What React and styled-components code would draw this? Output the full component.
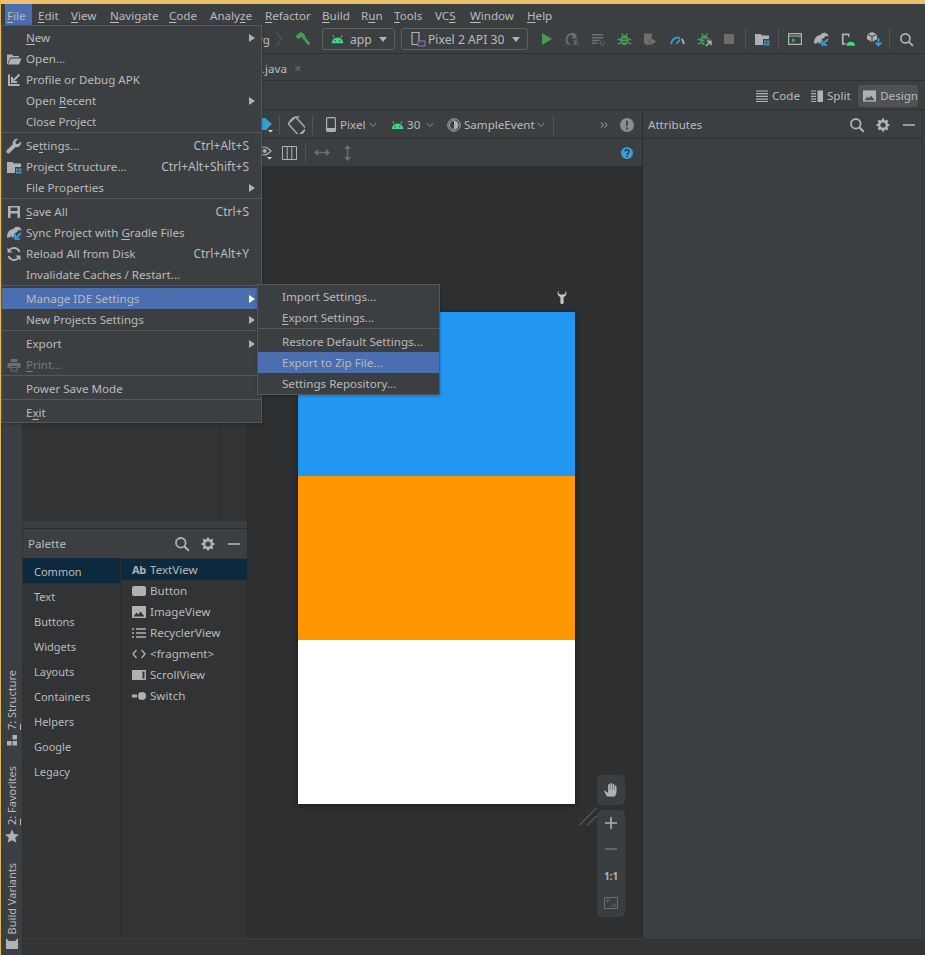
import React from "react";
import styled, { createGlobalStyle } from "styled-components";

const Global = createGlobalStyle`
  html, body { margin: 0; padding: 0; background: #3c3f41; }
  body { font-family: "Noto Sans", "Open Sans", sans-serif; font-size: 11.6px; color: #bbbbbb; }
  * { box-sizing: border-box; }
`;

const Win = styled.div`position: relative; width: 925px; height: 955px; overflow: hidden; display: flex; flex-direction: column; background: #3c3f41; border-left: 1px solid #e2b55c;`;
const TitleStripe = styled.div`flex: none; height: 4px; margin-left: -1px; background: #ecc06e;`;
const MenuBar = styled.div`flex: none; height: 21px; display: flex; padding-left: 4px;`;
const MenuTitle = styled.div`flex: none; width: ${p => p.$w}px; margin-right: ${p => p.$mr || 0}px; padding: 1px 0 0 2px; display: flex; align-items: center; background: ${p => (p.$on ? "#4b6eaf" : "transparent")}; white-space: nowrap;`;
const U = styled.span`text-decoration: underline; text-underline-offset: 2px; text-decoration-thickness: 1px;`;

const Bar = styled.div`flex: none; height: ${p => p.$h}px; display: flex; align-items: center; padding: ${p => p.$pt || 0}px ${p => p.$pr || 0}px 0 ${p => p.$pl || 0}px; justify-content: ${p => (p.$end ? "flex-end" : "flex-start")}; border-bottom: 1px solid ${p => p.$line || "#2f3133"}; overflow: hidden;`;
const Tool = styled.span`flex: none; display: flex; align-items: center; margin-left: ${p => p.$ml || 0}px; width: ${p => (p.$w ? p.$w + "px" : "auto")}; white-space: nowrap; color: ${p => p.$c || "inherit"};`;
const PushRight = styled(Tool)`margin-left: auto;`;
const Sep = styled.span`flex: none; width: 1px; height: 20px; margin-left: ${p => p.$ml || 0}px; background: #515355;`;
const Combo = styled.div`flex: none; display: flex; align-items: center; height: 22px; width: ${p => p.$w}px; margin-left: ${p => p.$ml}px; padding-left: 8px; border: 1px solid #5e6060; border-radius: 3px; gap: ${p => p.$g}px; font-size: 12.2px; white-space: nowrap;`;
const ComboCaret = styled.span`margin-left: auto; margin-right: 7px; width: 0; height: 0; border-left: 4px solid transparent; border-right: 4px solid transparent; border-top: 5px solid #afb1b3;`;
const WhiteTip = styled.span`flex: none; width: 3px; height: 14px; margin-left: 11px; background: #d4d4d4;`;
const TabClose = styled.span`flex: none; margin-left: 7px; font-size: 13px; color: #6e7072; line-height: 1;`;

const ModeGroup = styled.div`flex: none; display: flex; align-items: center; height: 22px; gap: 4px; width: ${p => p.$w}px; padding-left: ${p => p.$pl || 0}px; margin-left: ${p => p.$ml || 0}px; border-radius: 3px; background: ${p => (p.$on ? "#4e5254" : "transparent")};`;

const Work = styled.div`flex: 1; min-height: 0; display: flex;`;
const SideStripe = styled.div`flex: none; width: 22px; display: flex; flex-direction: column; justify-content: flex-end; align-items: center; padding-bottom: 6px; border-right: 1px solid #2f3133; background: #3c3f41;`;
const SideTab = styled.div`display: flex; flex-direction: column; align-items: center; gap: 4px; margin-top: ${p => p.$mt || 0}px;`;
const SideLabel = styled.span`writing-mode: vertical-rl; transform: rotate(180deg); font-size: 11px; white-space: nowrap; line-height: 14px;`;
const Main = styled.div`flex: 1; min-width: 0; display: flex; flex-direction: column;`;
const Panels = styled.div`flex: 1; min-height: 0; display: flex;`;
const StatusBar = styled.div`flex: none; height: 17px; background: #323436; border-top: 1px solid #3a3c3e;`;

const LeftCol = styled.div`flex: none; width: 225px; display: flex; flex-direction: column; background: #313335; border-right: 1px solid #2b2c2e;`;
const UpperLeft = styled.div`flex: 1; display: flex; justify-content: flex-end;`;
const Pane2 = styled.div`width: 27px; border-left: 1px solid #2b2c2e;`;
const GrabBar = styled.div`flex: none; height: 8px; background: #3c3f41; border-bottom: 1px solid #2b2c2e;`;
const PanelHead = styled.div`flex: none; height: 29px; display: flex; align-items: center; padding: 0 5px; background: #3c3f41;`;
const PanelBodyHead = styled(PanelHead)`padding-top: 1px; border-bottom: 1px solid #2f3133;`;
const PanelTitle = styled.span`flex: 1;`;
const HeadIcons = styled.div`display: flex; gap: 10px;`;
const PaletteBody = styled.div`flex: none; height: 380px; display: flex; background: #313335;`;
const CatList = styled.div`flex: none; width: 98px; border-right: 1px solid #2b2c2e;`;
const Cat = styled.div`height: 25px; display: flex; align-items: center; padding: 2px 0 0 11px; background: ${p => (p.$on ? "#0d293e" : "transparent")}; font-size: 11px;`;
const ItemList = styled.div`flex: 1; padding-top: 1px;`;
const Item = styled.div`height: 21px; display: flex; align-items: center; gap: 4px; padding-left: 11px; background: ${p => (p.$on ? "#0d293e" : "transparent")};`;
const AbIcon = styled.span`flex: none; width: 14px; font-weight: 700; font-size: 11px; color: #afb1b3; letter-spacing: -.4px;`;

const Editor = styled.div`flex: none; width: 395px; display: flex; flex-direction: column; border-right: 1px solid #2b2c2e;`;
const Canvas = styled.div`position: relative; flex: 1; background: #2e2f31; padding: 145px 0 0 50px;`;
const Device = styled.div`position: relative; width: 277px; height: 492px; display: flex; flex-direction: column; box-shadow: 0 1px 6px rgba(0,0,0,.45);`;
const Block = styled.div`flex: 1; background: ${p => p.$c};`;
const WrenchMark = styled.span`position: absolute; top: -22px; right: 8px; display: flex;`;
const ZoomDock = styled.div`position: absolute; left: 349px; top: 608px; display: flex; flex-direction: column; gap: 5px;`;
const ZoomBox = styled.div`width: 28px; display: flex; flex-direction: column; align-items: center; background: #3b3e40; border-radius: 5px; padding: ${p => p.$p || "0"}; gap: ${p => p.$g || 0}px;`;
const OneToOne = styled.span`font-size: 10px; font-weight: 700; color: #afb1b3; line-height: 14px;`;
const Resizer = styled.svg`position: absolute; left: 331px; top: 641px;`;

const Attrs = styled.div`flex: 1; min-width: 0; display: flex;`;
const AttrsMain = styled.div`flex: 1; min-width: 0; display: flex; flex-direction: column; border-right: 1px solid #2f3133;`;
const AttrsFill = styled.div`flex: 1; background: #3c3f41;`;
const RightEdge = styled.div`flex: none; width: 2px;`;

const Menu = styled.div`position: absolute; left: ${p => p.$x}px; top: ${p => p.$y}px; width: ${p => p.$w}px; height: ${p => p.$h}px; background: #3c3f41; border: 1px solid #555759; padding-top: 1px; overflow: hidden; box-shadow: 0 1px 3px rgba(0,0,0,.25);`;
const Row = styled.div`height: 21px; display: flex; align-items: center; padding-left: ${p => p.$pl || 4}px; padding-right: 11px; background: ${p => (p.$on ? "#4b6eaf" : "transparent")}; color: ${p => (p.$off ? "#777a7c" : "#bbbbbb")}; white-space: nowrap;`;
const RowIcon = styled.span`flex: none; width: 16px; height: 16px; margin-right: 4px; display: flex;`;
const Keys = styled.span`margin-left: auto; font-size: 12px; margin-right: 1px;`;
const Arrow = styled.span`margin-left: auto; margin-right: -5px; width: 0; height: 0; border-top: 4px solid transparent; border-bottom: 4px solid transparent; border-left: 6px solid ${p => (p.$w ? "#ffffff" : "#afb1b3")};`;
const MenuSep = styled.div`height: 3px; border-top: 1px solid #555759;`;

const G = "#afb1b3", GR = "#3ddc84", GN = "#499c54", BL = "#389fd6", DK = "#6e6e6e";
const Sv = ({ w = 16, h = 16, vb = "0 0 16 16", children }) => <svg width={w} height={h} viewBox={vb} fill="none">{children}</svg>;

const Android = ({ w = 13 }) => <Sv w={w} h={w * 0.72} vb="0 0 18 13"><path d="M1 13a8 8 0 0 1 16 0z" fill={GR} /><path d="M4.5 5.5 2.500 1.500M13.500 5.500l2-4" stroke={GR} strokeWidth="1.3" /><circle cx="5.800" cy="9.500" r="1" fill="#3c3f41" /><circle cx="12.200" cy="9.500" r="1" fill="#3c3f41" /></Sv>;
const Search = ({ s = 16 }) => <Sv w={s} h={s}><circle cx="6.800" cy="6.800" r="4.800" stroke={G} strokeWidth="1.8" /><path d="m10.500 10.500 4.300 4.300" stroke={G} strokeWidth="2.1" /></Sv>;
const Gear = () => <Sv><circle cx="8" cy="8" r="3.900" stroke={G} strokeWidth="2.6" /><path d="M8 1.500v3M8 11.500v3M1.500 8h3M11.500 8h3M3.400 3.400l2.100 2.100M10.500 10.500l2.100 2.100M12.600 3.400l-2.100 2.100M5.500 10.500l-2.100 2.100" stroke={G} strokeWidth="2.2" /></Sv>;
const Minus = () => <Sv><path d="M2 8h12" stroke={G} strokeWidth="1.6" /></Sv>;
const Wrench = () => <Sv><path d="M15 3.500 12 6.300 9.800 5.800 9.400 3.600 12.200.9A4.500 4.500 0 0 0 6.800 6.300L1 12a1.900 1.900 0 0 0 2.800 2.800l5.900-5.700A4.500 4.500 0 0 0 15 3.500z" fill={G} /></Sv>;
const UprightWrench = () => <Sv w={10} h={14} vb="0 0 10 14"><path d="M1.500.5A4 4 0 0 0 3.400 7v6a1.600 1 0 0 0 3.200 0V7A4 4 0 0 0 8.500.5V3.500L6.500 4.500h-3L1.500 3.500z" fill="#c4c6c8" /></Sv>;
const FolderOpen = () => <Sv><path d="M1 13V3.500h5l1.500 1.500H13v1.500H4L1.600 13z" fill={G} /><path d="M4.600 7.500H15.500L13 13.500H2z" fill={G} /></Sv>;
const ProfileApk = () => <Sv><path d="M2 2.500h2v9.500h9.500V14H2z" fill={G} /><path d="m13.500 2.500-6 6M6 5v5h5" stroke={G} strokeWidth="2" /></Sv>;
const ProjectStruct = ({ s = 16 }) => <Sv w={s} h={s}><path d="M1 3h5.500L8 4.500h7V8H9v6H1z" fill={G} /><path d="M10 9.500h2.400v2H10zM13 9.500h2.400v2H13zM13 12.300h2.400v2.200H13zM10 12.300h2.400v2.200H10z" fill={BL} /></Sv>;
const Save = () => <Sv><path d="M2 2h12v12H2z" fill={G} /><path d="M4.500 3.500h7v3.500h-7zM4.500 9.500h7v4.500h-7z" fill="#3c3f41" /></Sv>;
const Elephant = ({ s = 16 }) => <Sv w={s} h={s}><path d="M1 12.500C1 7.500 3.500 4 7.500 4c1-2 3.500-2.600 5.500-1.800 1.700.6 2.600 2 2.500 3.600l-2-.8c-.8 0-1.500.6-2 1.400-1.200 1.600-2.500 1-3.300 2.600L7.500 12.500H5.500V10.300L3.600 12.500z" fill={G} /><path d="m15 8-4.500 4.500M9.200 9v4.800H14" stroke={BL} strokeWidth="1.8" /></Sv>;
const Reload = () => <Sv><path d="M13.500 6A6 6 0 0 0 3 4.500M2.500 10A6 6 0 0 0 13 11.500" stroke={G} strokeWidth="2" /><path d="M1.500 1.500v5h5zM14.500 14.500v-5h-5z" fill={G} /></Sv>;
const Printer = () => <Sv><path d="M4.500 2h7v3h-7z" fill={DK} /><path d="M1.500 6h13v5h-3V9h-7v2h-3z" fill={DK} /><path d="M5 10.500h6V14H5z" stroke={DK} /></Sv>;
const Hammer = () => <Sv><path d="M.5 5.200 5.500 1l3 1.500 2 3-2 2-2-1.500-3.500 2z" fill={GN} /><path d="m7 6.500 1.700-1.700 6.600 7.500-2 2z" fill={GN} /></Sv>;
const DevicePick = () => <Sv w={16} h={16}><path d="M2 1.500h7v12H2z" stroke={G} strokeWidth="1.2" /><path d="M8 10h7v5H8z" fill="#3c3f41" stroke="#9876c4" /></Sv>;
const Play = () => <Sv w={12} h={14} vb="0 0 12 14"><path d="M1 1v12l10-6z" fill={GN} /></Sv>;
const Rerun = () => <Sv w={15} h={15}><path d="M13 4A6 6 0 1 0 6 13.500" stroke={DK} strokeWidth="2" /><path d="M9 1v6h6z" fill={DK} /><path d="M10.500 8.500 13 14M10.500 14l2.500-5.500 2 5.500" stroke={DK} /></Sv>;
const Apply = () => <Sv w={15} h={15}><path d="M1 3h12M1 6h12M1 9h8M1 12h6" stroke={DK} strokeWidth="1.6" /><path d="M14 10.500a2.300 2.300 0 1 1-2.500-1" stroke={DK} /></Sv>;
const Bug = ({ arrow }) => <Sv w={15} h={15}><path d="M8 3.500a4.400 5 0 0 0-4.400 5.500A4.400 5 0 0 0 8 14a4.400 5 0 0 0 4.400-5A4.400 5 0 0 0 8 3.500z" fill={GN} /><path d="M5 1.500 6.500 4M11 1.500 9.500 4M.8 8h3M12.200 8h3M1 13l3-1.500M15 13l-3-1.500" stroke={GN} strokeWidth="1.5" /><path d="M5.500 7.500h5M5.500 10.500h5" stroke="#3c3f41" strokeWidth="1.2" />{arrow && <path d="M8 8h8v8H8z" fill="#3c3f41" />}{arrow && <path d="m9.500 15 5-5M10.500 9.800h4.300v4.300" stroke={G} strokeWidth="1.6" />}</Sv>;
const ProfileRun = () => <Sv w={15} h={15}><path d="M1 1.500h8.500v4L7 8v5l-2 1.500L1 12z" fill={DK} /><path d="M7.500 6v8.500L14.500 10z" fill={DK} /></Sv>;
const Gauge = () => <Sv w={15} h={15}><path d="M1.500 13A6.600 6.600 0 0 1 11 6.700" stroke={BL} strokeWidth="2" /><path d="M7 12.500 10.700 8" stroke={BL} strokeWidth="1.8" /><path d="M12.500 7.500a6.600 6.600 0 0 1 2 5.500" stroke={G} strokeWidth="2" /></Sv>;
const Stop = () => <Sv w={10} h={10} vb="0 0 10 10"><path d="M0 0h10v10H0z" fill={DK} /></Sv>;
const Terminal = () => <Sv w={14} h={12} vb="0 0 14 12"><path d="M.6.6h12.800v10.800H.6z" stroke={G} strokeWidth="1.2" /><path d="M.6 3h12.800" stroke={G} /><path d="M4 5v4.500L8 7.200z" fill={GN} /></Sv>;
const PhoneAndroid = () => <Sv w={14} h={15}><path d="M1 1h8.500v4H8V3H3v9h2v2H1z" fill={G} /><path d="M6 15a5 4.500 0 0 1 10 0z" fill={GR} /></Sv>;
const Sdk = () => <Sv><path d="M6 1l5 2.300v5L6 11 1 8.300v-5z" fill={G} /><path d="M6 5.500V11M1 3.300l5 2.200 5-2.200" stroke="#3c3f41" /><path d="M12.500 7v7M9.500 11.500l3 3 3-3" stroke={BL} strokeWidth="1.7" /></Sv>;
const LinesIcon = () => <Sv w={12} h={12} vb="0 0 12 12"><path d="M0 1h12M0 3.700h12M0 6.400h12M0 9.100h12M0 11.500h12" stroke={G} strokeWidth="1.2" /></Sv>;
const SplitIcon = () => <Sv w={12} h={12} vb="0 0 12 12"><path d="M0 1h5M0 3.700h5M0 6.400h5M0 9.100h5M0 11.500h5" stroke={G} strokeWidth="1.2" /><path d="M6.500.5H12v11.500H6.500z" fill={G} /></Sv>;
const ImageIcon = ({ bg = "#4e5254", c = G }) => <Sv w={14} h={12} vb="0 0 14 12"><path d="M0 0h14v12H0z" fill={c} /><path d="m1.500 10.500 3-4 2 2 2-3 4 5z" fill={bg} /></Sv>;
const LayersBlue = () => <Sv><path d="M2 1h5l7 6-6 6H2z" fill={BL} /><path d="M10 13h5l-2.500 2.500z" fill="#d8d8d8" /></Sv>;
const Rotate = () => <Sv w={18} h={18}><rect x="4.500" y="2" width="9" height="14" rx="1" transform="rotate(-42 9 9)" stroke={G} strokeWidth="1.2" /><path d="M2 5.500A8 8 0 0 1 11 1M16 12a8 8 0 0 1-8 5" stroke={G} /></Sv>;
const Phone = () => <Sv w={10} h={15} vb="0 0 10 15"><rect x=".6" y=".6" width="8.800" height="13.800" rx="1" stroke={G} strokeWidth="1.2" /><path d="M1 11h8v3.500H1z" fill={G} /></Sv>;
const Chev = () => <Sv w={8} h={6} vb="0 0 8 6"><path d="m.8 1 3.200 3.400L7.200 1" stroke={DK} strokeWidth="1.2" /></Sv>;
const ThemeIcon = () => <Sv w={14} h={14} vb="0 0 14 14"><circle cx="7" cy="7" r="6.200" stroke={G} /><path d="M7 2.500a4.500 4.500 0 0 1 0 9z" fill={G} /><path d="M7 2.500a4.500 4.500 0 0 0 0 9" stroke={G} /></Sv>;
const DoubleChev = () => <Sv w={8} h={8} vb="0 0 8 8"><path d="m.8 1.500 2.700 2.500L.8 6.500M4.500 1.500 7.200 4 4.500 6.500" stroke={G} strokeWidth=".9" /></Sv>;
const Warn = () => <Sv w={14} h={14} vb="0 0 14 14"><circle cx="7" cy="7" r="7" fill="#8a8c8e" /><path d="M6 2.800h2l-.3 5.400H6.300zM6 9.500h2v2H6z" fill="#3c3f41" /></Sv>;
const Eye = () => <Sv w={14} h={15} vb="0 0 14 15"><path d="M0 6c2-3 4-4 6-4s4 1 7 4c-3 3-5 4-7 4S2 9 0 6z" stroke={G} strokeWidth="1.2" /><circle cx="6.500" cy="6" r="2" fill={G} /><path d="M9 12h5l-2.500 2.500z" fill="#d8d8d8" /></Sv>;
const Columns = () => <Sv w={15} h={14} vb="0 0 15 14"><path d="M.5.5h14v13H.5zM5.200.5v13M9.800.5v13" stroke={G} /></Sv>;
const HArrow = () => <Sv w={16} h={9} vb="0 0 16 9"><path d="M2 4.500h12" stroke={DK} strokeWidth="1.4" /><path d="M0 4.500 4 1v7zM16 4.500 12 1v7z" fill={DK} /></Sv>;
const VArrow = () => <Sv w={9} h={16} vb="0 0 9 16"><path d="M4.500 2v12" stroke={DK} strokeWidth="1.4" /><path d="M4.500 0 8 4H1zM4.500 16 8 12H1z" fill={DK} /></Sv>;
const Help = () => <Sv w={12} h={12} vb="0 0 12 12"><circle cx="6" cy="6" r="6" fill={BL} /><path d="M4 4.600a2 2 0 1 1 3.200 1.600c-.7.5-1.200.8-1.200 1.600" stroke="#2e2f31" strokeWidth="1.3" /><path d="M5.300 8.700h1.400v1.400H5.300z" fill="#2e2f31" /></Sv>;
const ButtonIcon = () => <Sv w={14} h={10} vb="0 0 14 10"><rect width="14" height="10" rx="2" fill={G} /></Sv>;
const ListIcon = () => <Sv w={14} h={10} vb="0 0 14 10"><path d="M0 1h2M4 1h10M0 5h2M4 5h10M0 9h2M4 9h10" stroke={G} strokeWidth="1.5" /></Sv>;
const CodeIcon = () => <Sv w={14} h={10} vb="0 0 14 10"><path d="M4.500 1 1 5l3.500 4M9.500 1 13 5l-3.500 4" stroke={G} strokeWidth="1.3" /></Sv>;
const ScrollIcon = () => <Sv w={14} h={10} vb="0 0 14 10"><path d="M0 0h14v10H0z" fill={G} /><path d="M10.500 1.500h2v7h-2z" fill="#313335" /></Sv>;
const SwitchIcon = () => <Sv w={14} h={8} vb="0 0 14 8"><path d="M0 2.500h5v3H0z" fill={G} /><circle cx="10" cy="4" r="4" fill={G} /></Sv>;
const Structure = () => <Sv w={12} h={12} vb="0 0 12 12"><path d="M6.500 1H11v4.500H6.500zM1 7h4.500v4.500H1zM6.500 7H11v4.500H6.500z" fill={G} /></Sv>;
const Star = () => <Sv w={14} h={14} vb="0 0 14 14"><path d="m7 .5 2 4.500 5 .5-3.800 3.300 1.200 5L7 11.200 2.600 13.800l1.200-5L0 5.500 5 5z" fill={G} /></Sv>;
const BuildVariant = () => <Sv w={12} h={11} vb="0 0 12 11"><path d="M0 0l3 3h6l3-3v11H0z" fill={G} /></Sv>;
const Hand = () => <Sv><path d="M3 9.500c-1-1.500-2.200-1-1.800 0L4 14.500h8l1.500-4V4.500a.9.9 0 0 0-1.800 0V8h-.4V2.800a.9.9 0 0 0-1.800 0V8h-.4V2a.9.9 0 0 0-1.800 0v6H6.900V3a.9.9 0 0 0-1.800 0v8z" fill={G} /></Sv>;
const Plus = () => <Sv w={12} h={12} vb="0 0 12 12"><path d="M6 0v12M0 6h12" stroke={G} strokeWidth="1.6" /></Sv>;
const ZoomOut = () => <Sv w={12} h={12} vb="0 0 12 12"><path d="M0 6h12" stroke={DK} strokeWidth="1.6" /></Sv>;
const Fit = () => <Sv w={14} h={12} vb="0 0 14 12"><path d="M.5.5h13v11H.5z" stroke={DK} /><path d="M3 5.500V3h3M11 6.500V9H8" stroke={DK} /></Sv>;

const Palette = [["Button", <ButtonIcon />], ["ImageView", <ImageIcon bg="#313335" />], ["RecyclerView", <ListIcon />], ["<fragment>", <CodeIcon />], ["ScrollView", <ScrollIcon />], ["Switch", <SwitchIcon />]];
const Cats = ["Text", "Buttons", "Widgets", "Layouts", "Containers", "Helpers", "Google", "Legacy"];

export default function App() {
  return (
    <Win>
      <Global />
      <TitleStripe />
      <MenuBar>
        <MenuTitle $w={27} $mr={4} $on><span><U>F</U>ile</span></MenuTitle>
        <MenuTitle $w={33}><span><U>E</U>dit</span></MenuTitle>
        <MenuTitle $w={39}><span><U>V</U>iew</span></MenuTitle>
        <MenuTitle $w={59}><span><U>N</U>avigate</span></MenuTitle>
        <MenuTitle $w={41}><span><U>C</U>ode</span></MenuTitle>
        <MenuTitle $w={55}><span>Analy<U>z</U>e</span></MenuTitle>
        <MenuTitle $w={57}><span><U>R</U>efactor</span></MenuTitle>
        <MenuTitle $w={39}><span><U>B</U>uild</span></MenuTitle>
        <MenuTitle $w={33}><span>R<U>u</U>n</span></MenuTitle>
        <MenuTitle $w={41}><span><U>T</U>ools</span></MenuTitle>
        <MenuTitle $w={35}><span>VC<U>S</U></span></MenuTitle>
        <MenuTitle $w={57}><span><U>W</U>indow</span></MenuTitle>
        <MenuTitle $w={38}><span><U>H</U>elp</span></MenuTitle>
      </MenuBar>

      <Bar $h={29} $pl={257} $line="#2f3133">
        <Tool $w={13}>rg</Tool>
        <Tool $ml={5}><Sv w={6} h={14} vb="0 0 6 14"><path d="m.5.5 5 6.500-5 6.500" stroke="#5e6060" /></Sv></Tool>
        <Tool $ml={13}><Hammer /></Tool>
        <Combo $w={73} $ml={11} $g={6}><Android /><span>app</span><ComboCaret /></Combo>
        <Combo $w={127} $ml={6} $g={2}><DevicePick /><span>Pixel 2 API 30</span><ComboCaret /></Combo>
        <Tool $ml={13}><Play /></Tool>
        <Tool $ml={11}><Rerun /></Tool>
        <Tool $ml={12}><Apply /></Tool>
        <Tool $ml={11}><Bug /></Tool>
        <Tool $ml={11}><ProfileRun /></Tool>
        <Tool $ml={12}><Gauge /></Tool>
        <Tool $ml={12}><Bug arrow /></Tool>
        <Tool $ml={12}><Stop /></Tool>
        <Sep $ml={11} />
        <Tool $ml={8}><ProjectStruct /></Tool>
        <Sep $ml={8} />
        <Tool $ml={9}><Terminal /></Tool>
        <Tool $ml={11}><Elephant /></Tool>
        <Tool $ml={12}><PhoneAndroid /></Tool>
        <Tool $ml={11}><Sdk /></Tool>
        <Sep $ml={7} />
        <Tool $ml={9}><Search s={15} /></Tool>
        <WhiteTip />
      </Bar>

      <Bar $h={27} $pl={261} $pt={2} $line="#2f3133">
        <span>.java</span>
        <TabClose>×</TabClose>
      </Bar>

      <Bar $h={29} $pt={1} $line="#2f3133" $end $pr={7}>
        <ModeGroup $w={50}><LinesIcon /><span>Code</span></ModeGroup>
        <ModeGroup $w={46} $ml={5}><SplitIcon /><span>Split</span></ModeGroup>
        <ModeGroup $w={60} $pl={5} $on $ml={1}><ImageIcon /><span>Design</span></ModeGroup>
      </Bar>

      <Work>
        <SideStripe>
          <SideTab>
            <SideLabel><U>7</U>: Structure</SideLabel>
            <Structure />
          </SideTab>
          <SideTab $mt={20}>
            <SideLabel><U>2</U>: Favorites</SideLabel>
            <Star />
          </SideTab>
          <SideTab $mt={20}>
            <SideLabel>Build Variants</SideLabel>
            <BuildVariant />
          </SideTab>
        </SideStripe>

        <Main>
          <Panels>
            <LeftCol>
              <UpperLeft><Pane2 /></UpperLeft>
              <GrabBar />
              <PanelHead>
                <PanelTitle>Palette</PanelTitle>
                <HeadIcons><Search /><Gear /><Minus /></HeadIcons>
              </PanelHead>
              <PaletteBody>
                <CatList>
                  <Cat $on>Common</Cat>
                  {Cats.map(c => <Cat key={c}>{c}</Cat>)}
                </CatList>
                <ItemList>
                  <Item $on><AbIcon>Ab</AbIcon><span>TextView</span></Item>
                  {Palette.map(([n, ic]) => <Item key={n}>{ic}<span>{n}</span></Item>)}
                </ItemList>
              </PaletteBody>
            </LeftCol>

            <Editor>
              <Bar $h={29} $pl={10} $pt={1} $line="#2f3133">
                <Tool><LayersBlue /></Tool>
                <Sep $ml={5} />
                <Tool $ml={7}><Rotate /></Tool>
                <Sep $ml={7} />
                <Tool $ml={13}><Phone /></Tool>
                <Tool $ml={4} $w={25}>Pixel</Tool>
                <Tool $ml={4}><Chev /></Tool>
                <Tool $ml={14}><Android /></Tool>
                <Tool $ml={3} $w={15}>30</Tool>
                <Tool $ml={4}><Chev /></Tool>
                <Tool $ml={13}><ThemeIcon /></Tool>
                <Tool $ml={3} $w={70}>SampleEvent</Tool>
                <Tool $ml={3}><Chev /></Tool>
                <Sep $ml={8} />
                <Tool $ml={46}><DoubleChev /></Tool>
                <Tool $ml={12}><Warn /></Tool>
              </Bar>
              <Bar $h={28} $pl={10} $pr={9} $line="#2e2f31">
                <Tool><Eye /></Tool>
                <Tool $ml={10}><Columns /></Tool>
                <Sep $ml={8} />
                <Tool $ml={8}><HArrow /></Tool>
                <Tool $ml={13}><VArrow /></Tool>
                <PushRight><Help /></PushRight>
              </Bar>
              <Canvas>
                <Device>
                  <WrenchMark><UprightWrench /></WrenchMark>
                  <Block $c="#2196f3" />
                  <Block $c="#ff9800" />
                  <Block $c="#ffffff" />
                </Device>
                <Resizer width="18" height="18" viewBox="0 0 18 18"><path d="M0 17.500 17.500 0M8 17.500 17.500 8" stroke="#8a8c8e" strokeWidth=".8" /></Resizer>
                <ZoomDock>
                  <ZoomBox $p="7px 0"><Hand /></ZoomBox>
                  <ZoomBox $p="7px 0 8px" $g={14}>
                    <Plus />
                    <ZoomOut />
                    <OneToOne>1:1</OneToOne>
                    <Fit />
                  </ZoomBox>
                </ZoomDock>
              </Canvas>
            </Editor>

            <Attrs>
              <AttrsMain>
                <PanelBodyHead>
                  <PanelTitle>Attributes</PanelTitle>
                  <HeadIcons><Search /><Gear /><Minus /></HeadIcons>
                </PanelBodyHead>
                <AttrsFill />
              </AttrsMain>
              <RightEdge />
            </Attrs>
          </Panels>
          <StatusBar />
        </Main>
      </Work>

      <Menu $x={0} $y={25} $w={261} $h={398}>
        <Row $pl={24}><span><U>N</U>ew</span><Arrow /></Row>
        <Row><RowIcon><FolderOpen /></RowIcon><span>Open...</span></Row>
        <Row><RowIcon><ProfileApk /></RowIcon><span>Profile or Debug APK</span></Row>
        <Row $pl={24}><span>Open <U>R</U>ecent</span><Arrow /></Row>
        <Row $pl={24}><span>Close Project</span></Row>
        <MenuSep />
        <Row><RowIcon><Wrench /></RowIcon><span>Se<U>t</U>tings...</span><Keys>Ctrl+Alt+S</Keys></Row>
        <Row><RowIcon><ProjectStruct /></RowIcon><span>Project Structure...</span><Keys>Ctrl+Alt+Shift+S</Keys></Row>
        <Row $pl={24}><span>File Properties</span><Arrow /></Row>
        <MenuSep />
        <Row><RowIcon><Save /></RowIcon><span><U>S</U>ave All</span><Keys>Ctrl+S</Keys></Row>
        <Row><RowIcon><Elephant /></RowIcon><span>Sync Project with <U>G</U>radle Files</span></Row>
        <Row><RowIcon><Reload /></RowIcon><span>Reload All from Disk</span><Keys>Ctrl+Alt+Y</Keys></Row>
        <Row $pl={24}><span>Invalidate Caches / Restart...</span></Row>
        <MenuSep />
        <Row $pl={24} $on><span>Manage IDE Settings</span><Arrow $w /></Row>
        <Row $pl={24}><span>New Projects Settings</span><Arrow /></Row>
        <MenuSep />
        <Row $pl={24}><span>Export</span><Arrow /></Row>
        <Row $off><RowIcon><Printer /></RowIcon><span><U>P</U>rint...</span></Row>
        <MenuSep />
        <Row $pl={24}><span>Power Save Mode</span></Row>
        <MenuSep />
        <Row $pl={24}><span>E<U>x</U>it</span></Row>
      </Menu>

      <Menu $x={256} $y={284} $w={183} $h={111}>
        <Row $pl={24}><span>Import Settings...</span></Row>
        <Row $pl={24}><span><U>E</U>xport Settings...</span></Row>
        <MenuSep />
        <Row $pl={24}><span>Restore Default Settings...</span></Row>
        <Row $pl={24} $on><span>Export to Zip File...</span></Row>
        <Row $pl={24}><span>Settings Repository...</span></Row>
      </Menu>
    </Win>
  );
}
